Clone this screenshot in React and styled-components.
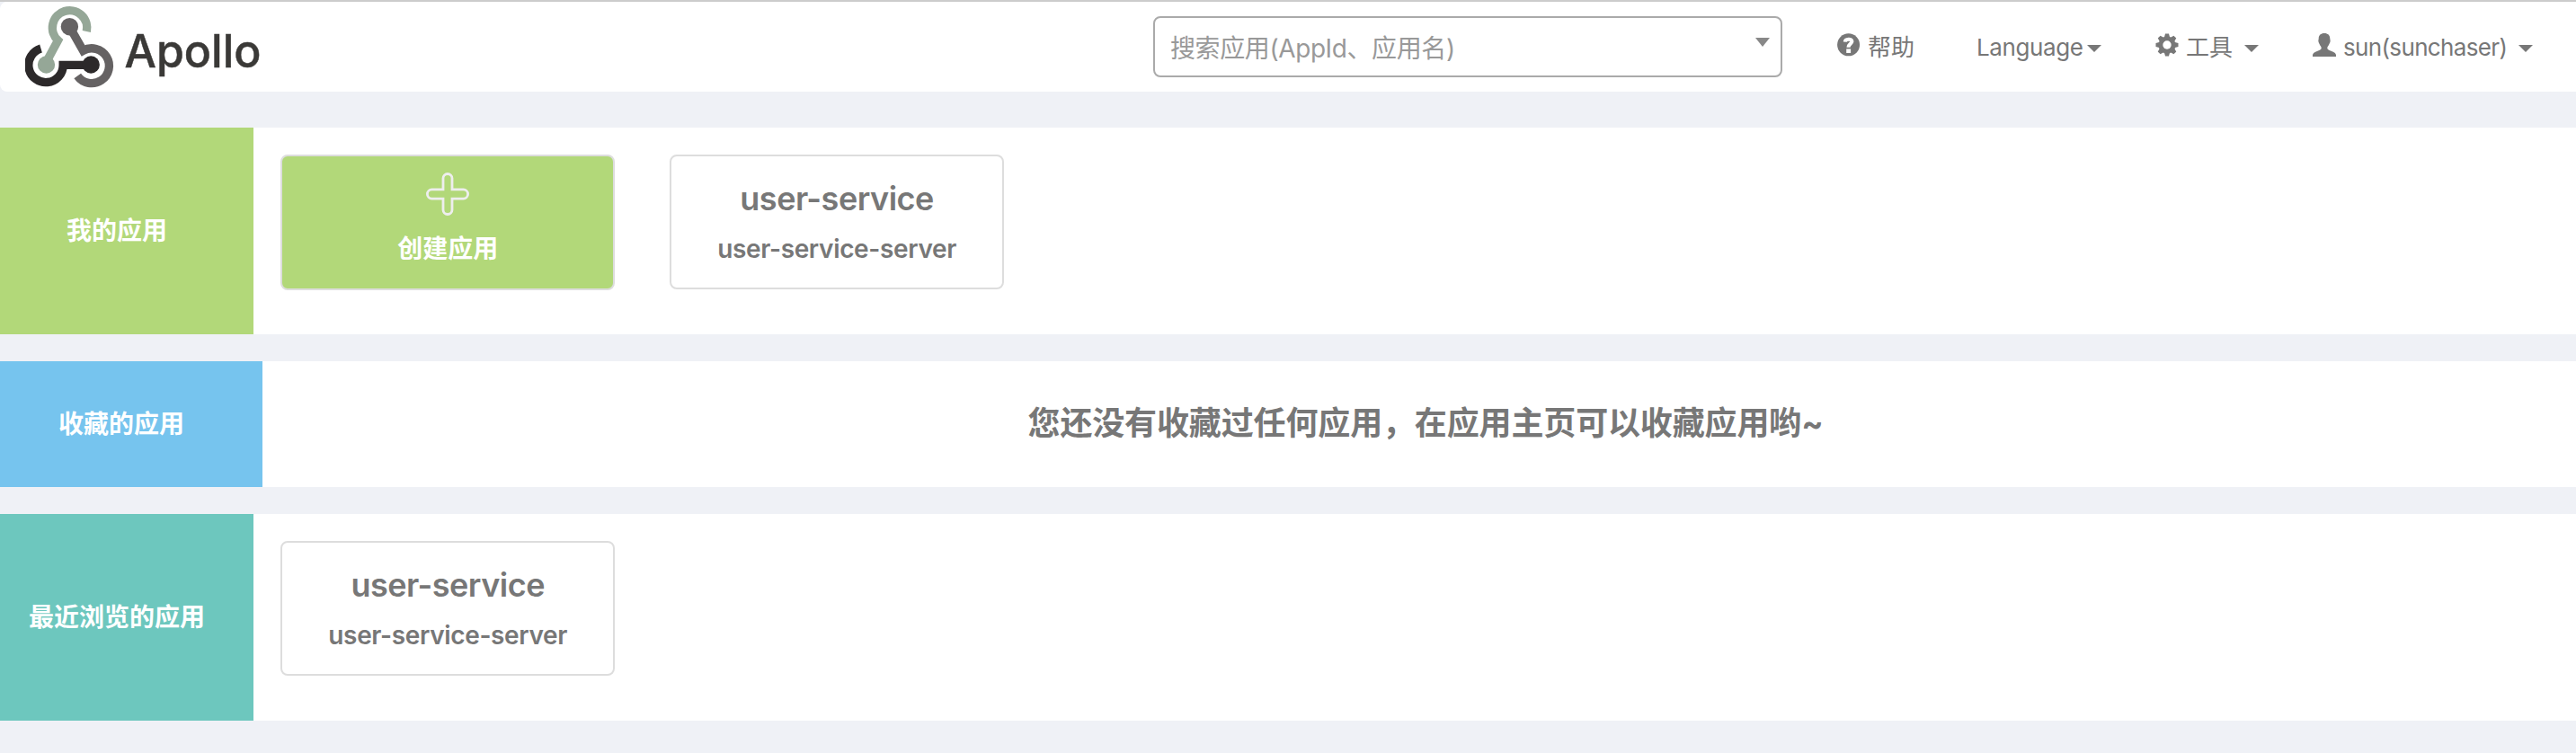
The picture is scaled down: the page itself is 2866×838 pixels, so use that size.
import React from 'react';
import styled, { createGlobalStyle } from 'styled-components';

const GlobalStyle = createGlobalStyle`
  *, *::before, *::after { box-sizing: border-box; }
  body {
    margin: 0;
    background: #eff1f6;
    color: #777;
    font-family: Inter, "Noto Sans CJK SC", sans-serif;
    font-size: 26px;
  }
`;

const Page = styled.div`
  min-height: 838px;
  border-top: 2px solid #ccc;
`;

const Header = styled.header`
  display: flex;
  align-items: flex-start;
  height: 100px;
  padding: 0 48px 0 28px;
  background: #fff;
  border-radius: 8px 0 0 8px;
`;

const Brand = styled.svg`
  display: block;
  width: 270px;
  height: 100px;
`;

const Search = styled.div`
  display: flex;
  align-items: center;
  width: 700px;
  height: 68px;
  margin: 16px 0 0 auto;
  padding: 0 12px 0 17px;
  border: 2px solid #aaa;
  border-radius: 8px;
  color: #999;
  font-size: 28px;
`;

const Placeholder = styled.span`
  flex: 1;
  white-space: nowrap;
  letter-spacing: -0.4px;
`;

const SearchArrow = styled.span`
  margin-bottom: 10px;
  border: solid transparent;
  border-width: 10px 8px 0;
  border-top-color: #888;
`;

const Nav = styled.nav`
  display: flex;
  gap: 60px;
  margin-left: 61px;
`;

const NavItem = styled.a`
  display: flex;
  align-items: center;
  width: ${(p) => p.$width}px;
  height: 40px;
  margin-top: 30px;
`;

const NavIcon = styled.svg`
  flex: none;
  width: 26px;
  height: 26px;
  margin: -5px 8px 0 0;
  overflow: visible;
`;

const NavLabel = styled.span`
  margin-bottom: ${(p) => p.$lift || 0}px;
  white-space: nowrap;
  letter-spacing: ${(p) => p.$spacing || 0}px;
`;

const Caret = styled.span`
  margin: 4px 0 0 auto;
  border: solid transparent;
  border-width: 8px 8px 0;
  border-top-color: #777;
`;

const Main = styled.main`
  display: flex;
  flex-direction: column;
  gap: 30px;
  padding-top: 40px;
`;

const Panel = styled.section`
  display: flex;
  height: ${(p) => p.$height}px;
  background: #fff;
`;

const PanelTitle = styled.h2`
  display: flex;
  align-items: center;
  justify-content: center;
  width: ${(p) => p.$width}px;
  margin: 0;
  padding: 0 22px 5px 0;
  background: ${(p) => p.$color};
  color: #fff;
  font-size: 28px;
  font-weight: 700;
  white-space: nowrap;
`;

const CardList = styled.div`
  display: flex;
  gap: 60.5px;
  padding: 30px 30px 0;
`;

const Card = styled.article`
  display: flex;
  flex-direction: column;
  align-items: center;
  width: 372.4px;
  height: 150px;
  border: 2px solid #ddd;
  border-radius: 8px;
  font-weight: 600;
`;

const CreateCard = styled(Card)`
  height: 151px;
  padding-top: 18px;
  background: #b2d879;
  color: #fff;
  font-size: 28px;
  font-weight: 700;
  line-height: 40px;
`;

const PlusIcon = styled.svg`
  width: 48px;
  height: 48px;
  margin-bottom: 17px;
`;

const AppName = styled.div`
  margin-top: 24px;
  font-size: 36px;
  line-height: 46px;
  letter-spacing: -0.5px;
  white-space: nowrap;
`;

const AppId = styled.div`
  margin-top: 15px;
  font-size: 28px;
  line-height: 36px;
  letter-spacing: -0.35px;
  white-space: nowrap;
`;

const EmptyText = styled.p`
  flex: 1;
  margin: 0;
  padding-left: 14px;
  font-size: 36px;
  font-weight: 700;
  line-height: 138px;
  letter-spacing: -0.14px;
  text-align: center;
`;

function Logo() {
  return (
    <Brand viewBox="28 2 270 100">
      <g fill="none" strokeWidth="9.4">
        <path d="M96.3 35 A19.2 19.2 0 1 0 64.5 45 L51 70" stroke="#95a797" />
        <path d="M77.5 30 L92.5 56.3 A19.4 19.4 0 1 1 86.2 84.5" stroke="#656263" />
        <path d="M45.5 54 A19.2 19.2 0 1 0 70.2 72.4 L101 72.4" stroke="#2c292a" />
      </g>
      <circle cx="51.5" cy="72" r="9.7" fill="#95a797" />
      <circle cx="77.4" cy="29.7" r="9.7" fill="#656263" />
      <circle cx="101.2" cy="72" r="9.7" fill="#2c292a" />
      <text x="138.5" y="75" fill="#3a3937" stroke="#3a3937" strokeWidth="0.5" fontFamily="Inter, sans-serif" fontSize="51" fontWeight="500" textLength="152" lengthAdjust="spacingAndGlyphs">Apollo</text>
    </Brand>
  );
}

function HelpIcon() {
  return (
    <NavIcon viewBox="0 0 26 26">
      <circle cx="12.6" cy="12.8" r="12.5" fill="#777" />
      <path d="M8.8 9.6 C9 6.2 16.5 5.7 16.4 9.2 C16.3 11.4 12.6 12 12.5 15.8" fill="none" stroke="#fff" strokeWidth="4.1" />
      <path d="M10.2 17.4h4.9v4.6h-4.9z" fill="#fff" />
    </NavIcon>
  );
}

function GearIcon() {
  return (
    <NavIcon viewBox="-13 -13 26 26">
      {[0, 45, 90, 135].map((a) => (
        <path key={a} d="M-3.2-8 L-2-12.5 H2 L3.2-8 V8 L2 12.5 H-2 L-3.2 8z" fill="#777" transform={`rotate(${a})`} />
      ))}
      <circle r="9.5" fill="#777" />
      <circle r="4.7" fill="#fff" />
    </NavIcon>
  );
}

function UserIcon() {
  return (
    <NavIcon viewBox="0 0 26 26">
      <path d="M13 0C17 0 19.3 2.3 19.3 6c0 1 .5 1.4.3 3-.2 1.7-1 2.3-1.5 3.7-.6 1.6-1.8 2.2-1.8 3.5 0 1.8 1.5 2.5 4.2 3.6C24 21.1 26 22.2 26 24.5V26H0v-1.5c0-2.3 2-3.4 5.5-4.7 2.7-1.1 4.2-1.8 4.2-3.6 0-1.3-1.2-1.9-1.8-3.5C7.4 11.3 6.6 10.700 6.400 9c-.2-1.600.3-2 .3-3C6.700 2.300 9 0 13 0z" fill="#777" />
    </NavIcon>
  );
}

function AppCard({ name, id }) {
  return (
    <Card>
      <AppName>{name}</AppName>
      <AppId>{id}</AppId>
    </Card>
  );
}

export default function App() {
  return (
    <Page>
      <GlobalStyle />
      <Header>
        <Logo />
        <Search>
          <Placeholder>搜索应用(AppId、应用名)</Placeholder>
          <SearchArrow />
        </Search>
        <Nav>
          <NavItem $width={95}><HelpIcon /><NavLabel $lift={3}>帮助</NavLabel></NavItem>
          <NavItem $width={139}><NavLabel $spacing={-0.4}>Language</NavLabel><Caret /></NavItem>
          <NavItem $width={115}><GearIcon /><NavLabel $lift={3}>工具</NavLabel><Caret /></NavItem>
          <NavItem $width={245}><UserIcon /><NavLabel $spacing={-0.65}>sun(sunchaser)</NavLabel><Caret /></NavItem>
        </Nav>
      </Header>
      <Main>
        <Panel $height={230}>
          <PanelTitle $width={282} $color="#b2d879">我的应用</PanelTitle>
          <CardList>
            <CreateCard>
              <PlusIcon viewBox="0 0 48 48">
                <path d="M24 1.5a5 5 0 0 1 5 5V18.9H41.5a5 5 0 0 1 0 10.2H29V41.5a5 5 0 0 1-10 0V29.1H6.5a5 5 0 0 1 0-10.2H19V6.5a5 5 0 0 1 5-5z" fill="none" stroke="#eee" strokeWidth="2.8" />
              </PlusIcon>
              创建应用
            </CreateCard>
            <AppCard name="user-service" id="user-service-server" />
          </CardList>
        </Panel>
        <Panel $height={140}>
          <PanelTitle $width={292} $color="#76c4ee">收藏的应用</PanelTitle>
          <EmptyText>您还没有收藏过任何应用，在应用主页可以收藏应用哟~</EmptyText>
        </Panel>
        <Panel $height={230}>
          <PanelTitle $width={282} $color="#6dc7be">最近浏览的应用</PanelTitle>
          <CardList>
            <AppCard name="user-service" id="user-service-server" />
          </CardList>
        </Panel>
      </Main>
    </Page>
  );
}
